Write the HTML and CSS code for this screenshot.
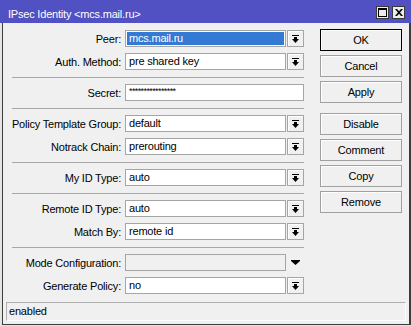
FILE: index.html
```html
<!DOCTYPE html>
<html>
<head>
<meta charset="utf-8">
<link rel="stylesheet" href="styles.css">
</head>
<body>
<div class="window">
  <div class="titlebar">
    <span class="title">IPsec Identity &lt;mcs.mail.ru&gt;</span>
    <div class="tb-buttons">
      <span class="tb-btn"><svg width="9" height="9" viewBox="0 0 9 9"><rect x="0.5" y="0.5" width="8" height="8" fill="none" stroke="#000"/><rect x="0" y="0" width="9" height="2" fill="#000"/></svg></span>
      <span class="tb-btn"><svg width="8" height="7" viewBox="0 0 8 7"><path d="M0 0h2l2 2.3 2-2.3h2l-3 3.5 3 3.5h-2l-2-2.3-2 2.3h-2l3-3.5z" fill="#000"/></svg></span>
    </div>
  </div>
  <div class="frame">
    <div class="main">
      <div class="form">
        <div class="row"><span class="label">Peer:</span><div class="field selected"><span class="sel">mcs.mail.ru</span></div><span class="dd"><svg width="7" height="8" viewBox="0 0 7 8"><rect x="0" y="0" width="7" height="1"/><rect x="2" y="2" width="3" height="2"/><path d="M0 4h7l-3.5 4z"/></svg></span></div>
        <div class="row"><span class="label">Auth. Method:</span><div class="field">pre shared key</div><span class="dd"><svg width="7" height="8" viewBox="0 0 7 8"><rect x="0" y="0" width="7" height="1"/><rect x="2" y="2" width="3" height="2"/><path d="M0 4h7l-3.5 4z"/></svg></span></div>
        <div class="sep"></div>
        <div class="row"><span class="label">Secret:</span><div class="field wide secret">****************</div></div>
        <div class="sep"></div>
        <div class="row"><span class="label">Policy Template Group:</span><div class="field">default</div><span class="dd"><svg width="7" height="8" viewBox="0 0 7 8"><rect x="0" y="0" width="7" height="1"/><rect x="2" y="2" width="3" height="2"/><path d="M0 4h7l-3.5 4z"/></svg></span></div>
        <div class="row"><span class="label">Notrack Chain:</span><div class="field">prerouting</div><span class="dd"><svg width="7" height="8" viewBox="0 0 7 8"><rect x="0" y="0" width="7" height="1"/><rect x="2" y="2" width="3" height="2"/><path d="M0 4h7l-3.5 4z"/></svg></span></div>
        <div class="sep"></div>
        <div class="row"><span class="label">My ID Type:</span><div class="field">auto</div><span class="dd"><svg width="7" height="8" viewBox="0 0 7 8"><rect x="0" y="0" width="7" height="1"/><rect x="2" y="2" width="3" height="2"/><path d="M0 4h7l-3.5 4z"/></svg></span></div>
        <div class="sep"></div>
        <div class="row"><span class="label">Remote ID Type:</span><div class="field">auto</div><span class="dd"><svg width="7" height="8" viewBox="0 0 7 8"><rect x="0" y="0" width="7" height="1"/><rect x="2" y="2" width="3" height="2"/><path d="M0 4h7l-3.5 4z"/></svg></span></div>
        <div class="row"><span class="label">Match By:</span><div class="field">remote id</div><span class="dd"><svg width="7" height="8" viewBox="0 0 7 8"><rect x="0" y="0" width="7" height="1"/><rect x="2" y="2" width="3" height="2"/><path d="M0 4h7l-3.5 4z"/></svg></span></div>
        <div class="sep"></div>
        <div class="row"><span class="label">Mode Configuration:</span><div class="field disabled"></div><span class="dd-plain"><svg width="9" height="5" viewBox="0 0 9 5"><path d="M0 0h9v1l-4.5 4-4.5-4z"/></svg></span></div>
        <div class="row"><span class="label">Generate Policy:</span><div class="field">no</div><span class="dd"><svg width="7" height="8" viewBox="0 0 7 8"><rect x="0" y="0" width="7" height="1"/><rect x="2" y="2" width="3" height="2"/><path d="M0 4h7l-3.5 4z"/></svg></span></div>
      </div>
      <div class="actions">
        <div class="btn default">OK</div>
        <div class="btn">Cancel</div>
        <div class="btn">Apply</div>
        <div class="btn gap">Disable</div>
        <div class="btn">Comment</div>
        <div class="btn">Copy</div>
        <div class="btn">Remove</div>
      </div>
    </div>
    <div class="status">enabled</div>
  </div>
</div>
</body>
</html>
```

FILE: styles.css
```css
html, body {
  margin: 0;
  padding: 0;
}
body {
  background: #e4e4e4;
  font-family: "Liberation Sans", Arial, sans-serif;
  font-size: 11px;
  letter-spacing: -0.2px;
  color: #000;
  width: 411px;
  height: 326px;
  overflow: hidden;
}
.window {
  width: 411px;
  height: 325px;
  display: flex;
  flex-direction: column;
}
.titlebar {
  height: 23px;
  background: #5151c3;
  color: #fff;
  display: flex;
  align-items: flex-start;
  justify-content: space-between;
  flex: none;
}
.title {
  padding: 8px 0 0 8px;
  line-height: 13px;
}
.tb-buttons {
  display: flex;
  gap: 3px;
  padding: 6px 6px 0 0;
}
.tb-btn {
  width: 11px;
  height: 11px;
  border: 1px solid #3a3a3a;
  background: #ececec;
  display: flex;
  align-items: center;
  justify-content: center;
}
.frame {
  flex: 1;
  margin-left: 2px;
  border-left: 1px solid #3c3c3c;
  border-right: 2px solid #3c3c3c;
  border-bottom: 1px solid #3c3c3c;
  background: #f0f0f0;
  display: flex;
  flex-direction: column;
}
.main {
  display: flex;
  align-items: flex-start;
}
.form {
  padding: 7px 0 0 9px;
  width: 292px;
  display: flex;
  flex-direction: column;
  gap: 6px;
}
.row {
  display: flex;
  align-items: center;
  height: 17px;
}
.label {
  width: 109px;
  margin-right: 4px;
  text-align: right;
  white-space: nowrap;
  flex: none;
  display: flex;
  justify-content: flex-end;
}
.field {
  box-sizing: border-box;
  width: 161px;
  height: 17px;
  border: 1px solid #a5a5a5;
  background: #fff;
  padding: 0 3px;
  line-height: 15px;
  white-space: nowrap;
  overflow: hidden;
  flex: none;
}
.field.wide {
  width: 179px;
}
.field.secret {
  font-size: 9px;
  letter-spacing: -0.6px;
  line-height: 13px;
}
.field.selected {
  padding: 1px;
}
.sel {
  display: block;
  height: 13px;
  background: #3479d3;
  color: #fff;
  line-height: 13px;
  padding-left: 2px;
}
.field.disabled {
  background: #f0f0f0;
}
.dd {
  box-sizing: border-box;
  width: 17px;
  height: 17px;
  margin-left: 1px;
  border: 1px solid #a5a5a5;
  box-shadow: inset 1px 1px #fff;
  background: #f0f0f0;
  display: flex;
  align-items: center;
  justify-content: center;
  flex: none;
}
.dd-plain {
  width: 17px;
  height: 17px;
  margin-left: 1px;
  display: flex;
  align-items: center;
  justify-content: center;
  flex: none;
}
.sep {
  height: 1px;
  background: #a8a8a8;
  margin-top: 1px;
}
.actions {
  margin-left: 16px;
  padding-top: 6px;
  display: flex;
  flex-direction: column;
  gap: 4px;
}
.btn {
  box-sizing: border-box;
  width: 82px;
  height: 22px;
  border: 1px solid #a0a0a0;
  box-shadow: inset 1px 1px #fff;
  background: #f0f0f0;
  display: flex;
  align-items: center;
  justify-content: center;
}
.btn.default {
  border-color: #000;
}
.btn.gap {
  margin-top: 6px;
}
.status {
  box-sizing: border-box;
  margin: 8px 3px 3px 3px;
  height: 19px;
  border: 1px solid #b0b0b0;
  border-right-color: #fff;
  border-bottom-color: #fff;
  padding-left: 2px;
  line-height: 16px;
  margin-top: auto;
}
```
